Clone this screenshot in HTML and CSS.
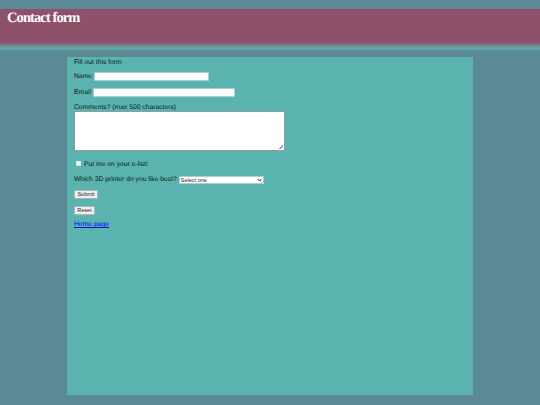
FILE: index.html
```html
<!DOCTYPE html>
<html lang="en">
<head>
<meta charset="UTF-8">
<meta name="viewport" content="width=device-width, initial-scale=1.0">
<title>Contact form</title>
<link rel="stylesheet" href="styles.css">
</head>
<body>

<header class="banner">
    <h1>Contact form</h1>
</header>

<main class="container">
    <form class="contact-form">
        <div class="legend">Fill out this form</div>
        <div class="field">
            <label for="name">Name</label>
            <input type="text" id="name" class="name-input">
        </div>
        <div class="field email-field">
            <label for="email">Email</label>
            <input type="text" id="email" class="email-input">
        </div>
        <div class="field-stack">
            <label for="comments">Comments? (max 500 characters)</label>
            <textarea id="comments"></textarea>
        </div>
        <div class="field check-field">
            <input type="checkbox" id="elist">
            <label for="elist">Put me on your e-list!</label>
        </div>
        <div class="field printer-field">
            <label for="printer">Which 3D printer do you like best?</label>
            <select id="printer">
                <option>Select one</option>
            </select>
        </div>
        <button type="button" class="form-btn submit-btn">Submit</button>
        <button type="button" class="form-btn reset-btn">Reset</button>
        <a class="home-link" href="#">Home page</a>
    </form>
</main>

</body>
</html>
```

FILE: styles.css
```css
html, body {
    height: 100%;
}

body {
    margin: 0;
    padding: 9px 0 10px;
    box-sizing: border-box;
    background-color: #5b8a96;
    font-family: "Liberation Sans", Arial, sans-serif;
    font-size: 6.75px;
    color: #0a1a1a;
    text-rendering: geometricPrecision;
    display: flex;
    flex-direction: column;
}

.banner {
    height: 41px;
    background: linear-gradient(to bottom, #8f5069 0, #8f5069 33px, #62a5a6 39px, #62a5a6 41px);
    flex-shrink: 0;
}

.banner h1 {
    margin: 0;
    padding: 1px 0 0 7px;
    font-family: "Liberation Serif", serif;
    font-size: 14.5px;
    line-height: 16px;
    letter-spacing: -0.9px;
    color: #fff;
}

.container {
    flex: 1;
    width: 406px;
    margin: 7px auto 0;
    box-sizing: border-box;
    background-color: #5ab3ae;
    padding: 0 7px;
}

.contact-form {
    display: flex;
    flex-direction: column;
    align-items: flex-start;
}

.legend {
    padding-top: 1px;
    line-height: 9px;
    margin-bottom: 5px;
}

.field {
    display: flex;
    align-items: center;
    gap: 2px;
    height: 9px;
    margin-bottom: 7px;
}

.email-field {
    margin-bottom: 6px;
}

input[type="text"] {
    box-sizing: border-box;
    height: 9px;
    padding: 0;
    background: #fff;
    border: 1px solid #a9cfcc;
}

.name-input {
    width: 115px;
}

.email-input {
    width: 142px;
}

.field-stack {
    display: flex;
    flex-direction: column;
    margin-bottom: 8px;
}

.field-stack label {
    padding-top: 1px;
    line-height: 7px;
}

textarea {
    box-sizing: border-box;
    width: 211px;
    height: 40px;
    padding: 0;
    margin: 0;
    resize: none;
    background:
        linear-gradient(135deg, transparent 50%, #9a9a9a 50%, #9a9a9a 65%, transparent 65%) right 1px bottom 1px / 4px 4px no-repeat,
        #fff;
    border: 1px solid #8a9f9e;
}

.check-field {
    gap: 3px;
}

.check-field label {
    padding-top: 1px;
}

.check-field input {
    appearance: none;
    box-sizing: border-box;
    width: 5px;
    height: 5px;
    margin: 0 0 0 2px;
    background: #fff;
    border: 1px solid #d8e8e6;
}

.printer-field {
    margin-bottom: 6px;
}

select {
    appearance: none;
    box-sizing: border-box;
    width: 85px;
    height: 8px;
    padding: 0 0 0 1px;
    margin: 0;
    font-family: "Liberation Sans", Arial, sans-serif;
    font-size: 5.5px;
    color: #222;
    background: url("data:image/svg+xml,%3Csvg xmlns='http://www.w3.org/2000/svg' width='5' height='4'%3E%3Cpath d='M.7 1 2.5 3 4.3 1' fill='none' stroke='%23222' stroke-width='1'/%3E%3C/svg%3E") right 1px center no-repeat #fff;
    border: 1px solid #a9cfcc;
}

.form-btn {
    box-sizing: border-box;
    height: 9px;
    padding: 0;
    font-family: "Liberation Sans", Arial, sans-serif;
    font-size: 5.5px;
    line-height: 7px;
    color: #222;
    background: #efefef;
    border: 1px solid #a9b5b5;
    border-radius: 1px;
}

.submit-btn {
    width: 24px;
    margin-bottom: 7px;
}

.reset-btn {
    width: 21px;
    margin-bottom: 5px;
}

.home-link {
    color: #0000ee;
    line-height: 9px;
}
```
